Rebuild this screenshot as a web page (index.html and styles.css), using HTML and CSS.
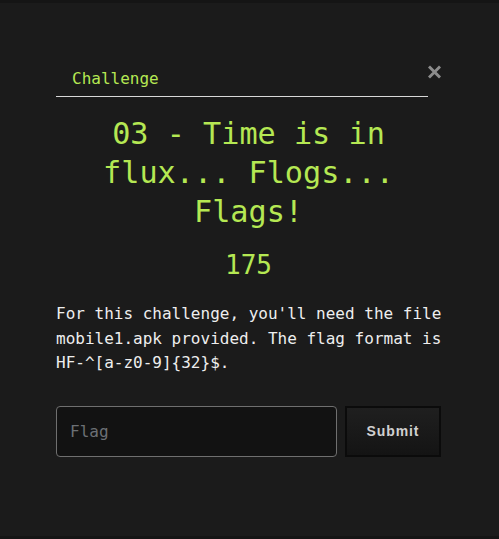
FILE: index.html
```html
<!DOCTYPE html>
<html>
<head>
<meta charset="utf-8">
<link rel="stylesheet" href="styles.css">
</head>
<body>
<div class="page">
  <div class="modal">
    <div class="header">
      <div class="tab"><span class="tab-label">Challenge</span></div>
      <button class="close" aria-label="Close">
        <svg width="13" height="14" viewBox="0 0 13 14"><path d="M2 2.5 L11 11.5 M11 2.5 L2 11.5" stroke="#8c8c8c" stroke-width="3" stroke-linecap="square" fill="none"/></svg>
      </button>
    </div>
    <h1 class="title">03 - Time is in flux... Flogs... Flags!</h1>
    <div class="points">175</div>
    <p class="desc">For this challenge, you'll need the file mobile1.apk provided. The flag format is HF-^[a-z0-9]{32}$.</p>
    <form class="flag-form">
      <input class="flag-input" type="text" placeholder="Flag">
      <button class="submit" type="button">Submit</button>
    </form>
  </div>
</div>
</body>
</html>
```
FILE: styles.css
```css
html, body {
  margin: 0;
  padding: 0;
  background: #1b1b1b;
}
.page {
  height: 539px;
  box-sizing: border-box;
  border-top: 3px solid #151515;
  border-bottom: 3px solid #151515;
  background: #1b1b1b;
  font-family: "DejaVu Sans Mono", monospace;
}
.modal {
  width: 385px;
  margin-left: 56px;
  padding-top: 64px;
}
.header {
  display: flex;
  align-items: flex-start;
}
.tab {
  width: 372px;
  border-bottom: 1px solid #d8d8d8;
  padding: 0 0 5px 16px;
  box-sizing: border-box;
}
.tab-label {
  display: block;
  color: #b5e853;
  font-size: 16px;
  line-height: 24px;
}
.close {
  background: none;
  border: 0;
  padding: 0;
  margin-top: -2px;
  width: 13px;
  height: 14px;
  display: flex;
}
.title {
  margin: 17px 0 0;
  text-align: center;
  color: #b5e853;
  font-weight: normal;
  font-size: 30.2px;
  line-height: 39px;
}
.points {
  margin-top: 17px;
  text-align: center;
  color: #b5e853;
  font-size: 26px;
  line-height: 34px;
}
.desc {
  width: 395px;
  margin: 20px 0 0;
  color: #eeeeee;
  font-size: 16px;
  line-height: 24.5px;
}
.flag-form {
  margin-top: 30px;
  display: flex;
  gap: 8px;
}
.flag-input {
  width: 281px;
  height: 51px;
  box-sizing: border-box;
  background: #121212;
  border: 1px solid #6f6f6f;
  border-radius: 4px;
  padding: 0 13px;
  color: #eaeaea;
  font-family: "DejaVu Sans Mono", monospace;
  font-size: 16px;
  outline: none;
}
.flag-input::placeholder {
  color: #6c7075;
}
.submit {
  width: 96px;
  height: 51px;
  box-sizing: border-box;
  border: 2px solid #0b0b0b;
  background: linear-gradient(#1f1f1f, #141414);
  color: #d0d0d0;
  font-family: "Liberation Sans", Arial, sans-serif;
  font-weight: bold;
  font-size: 14px;
  letter-spacing: 0.9px;
  padding: 0;
}
```
